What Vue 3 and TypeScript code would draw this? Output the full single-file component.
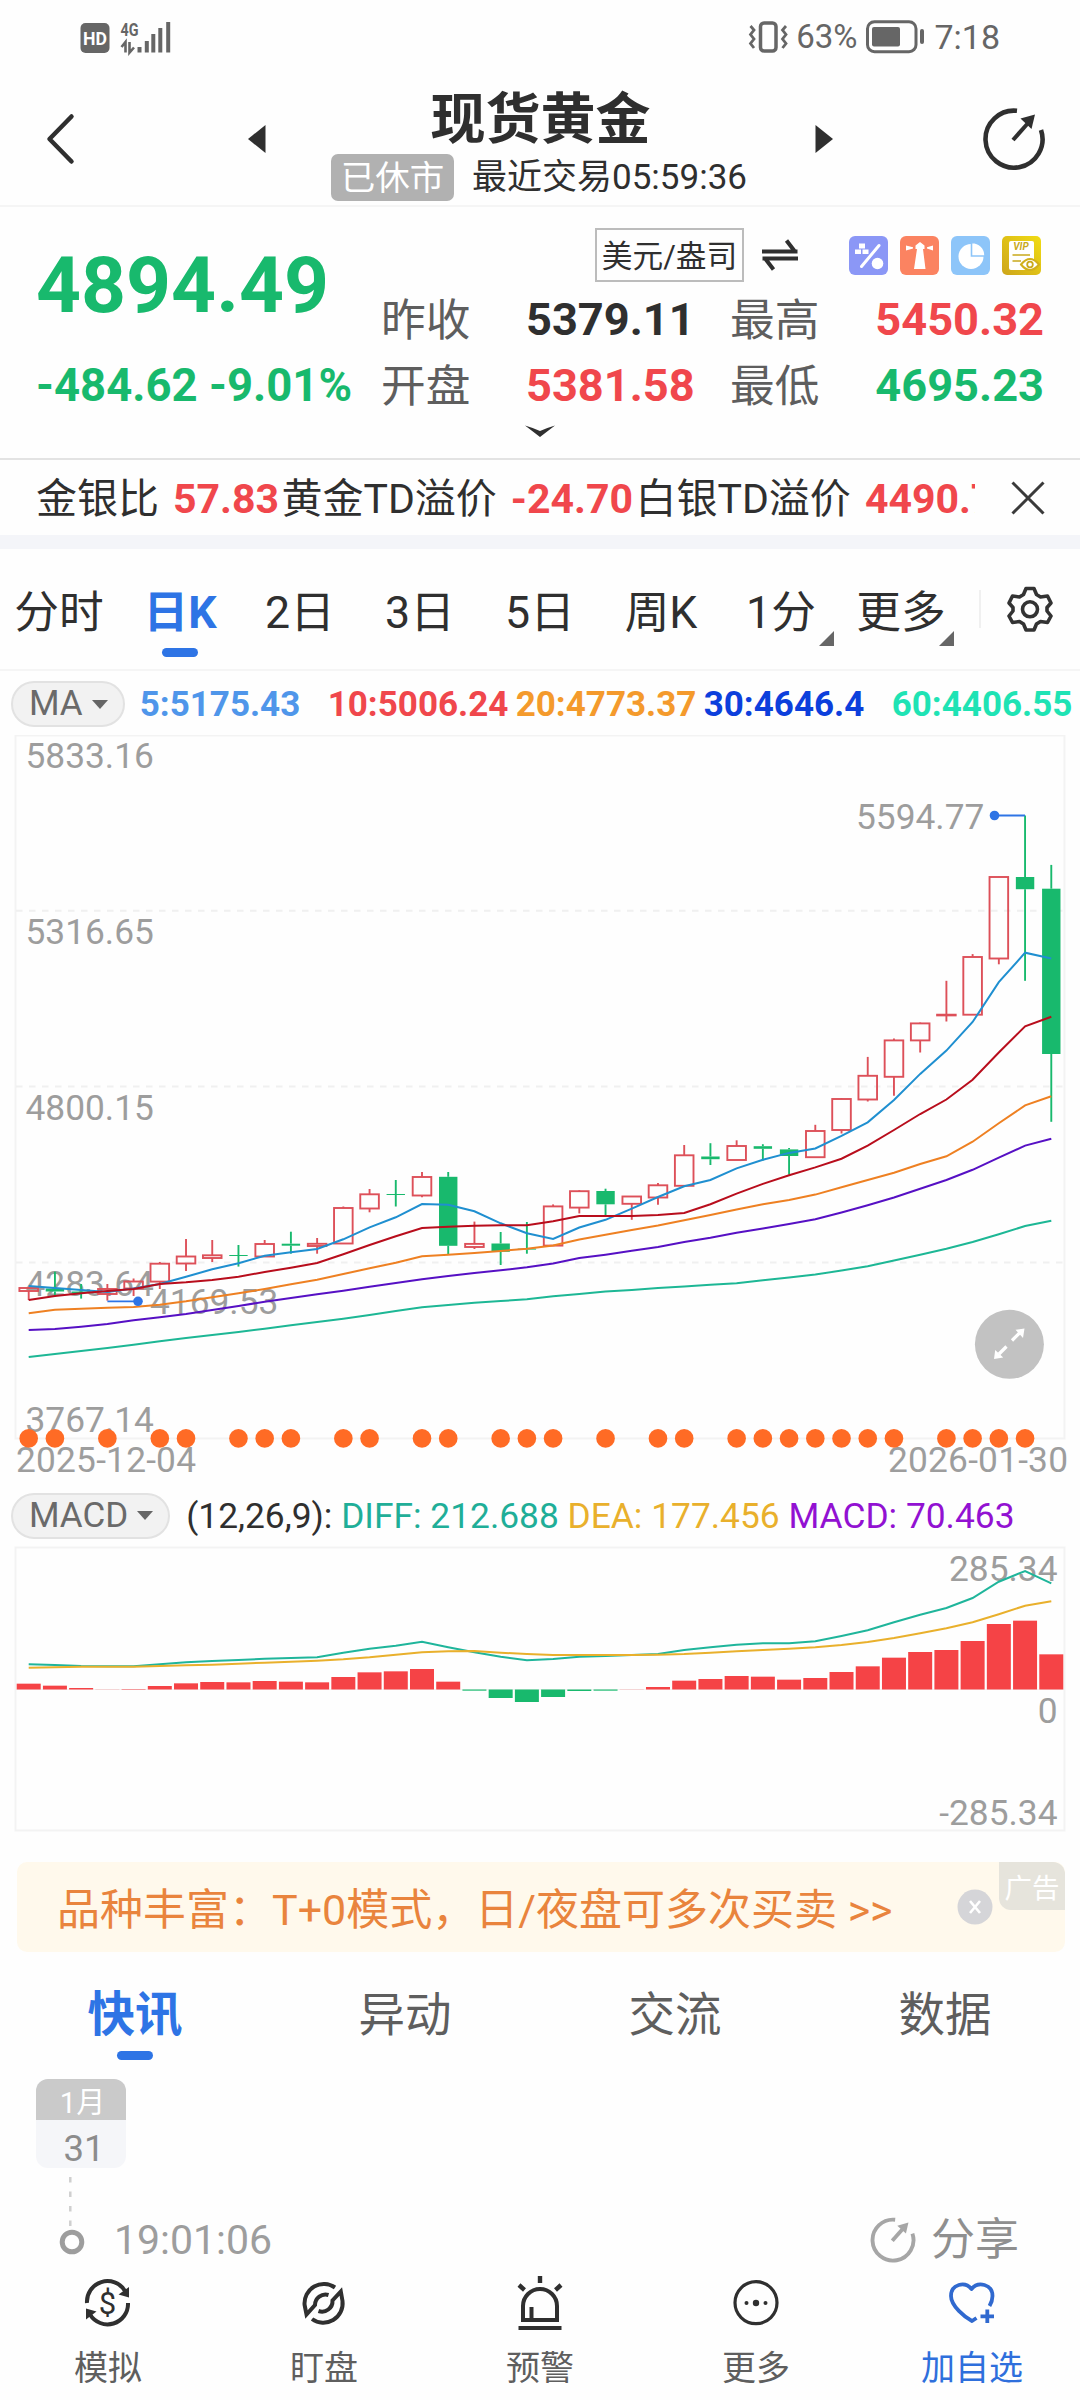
<script setup lang="ts">
interface Candle { up: boolean; high: number; top: number; bottom: number; low: number }

const periods: { label: string; menu?: boolean }[] = [
  { label: '分时' }, { label: '日K' }, { label: '2日' }, { label: '3日' },
  { label: '5日' }, { label: '周K' }, { label: '1分', menu: true }, { label: '更多', menu: true },
]
const averages = [
  { text: '5:5175.43', color: '#4f96ea' },
  { text: '10:5006.24', color: '#f0474c' },
  { text: '20:4773.37', color: '#f49a2c' },
  { text: '30:4646.4', color: '#0c3fdc' },
  { text: '60:4406.55', color: '#1fe3b4' },
]
const ticker = [
  { name: '金银比', value: '57.83' },
  { name: '黄金TD溢价', value: '-24.70' },
  { name: '白银TD溢价', value: '4490.77' },
]
const feeds = ['快讯', '异动', '交流', '数据']

// Chart geometry: 40 sessions, evenly spaced
const step = 26.22
const cx = (i: number): number => 28.7 + i * step
const pts = (ys: number[], f: (n: number) => number = n => n): string =>
  ys.map((y, i) => `${cx(i).toFixed(1)},${f(y).toFixed(1)}`).join(' ')

const rows: [number, number, number, number, number][] = [
  [1, 1287, 1288, 1291, 1300], [0, 1271.7, 1288.5, 1291.5, 1296.5], [0, 1284, 1291.5, 1293, 1298.6],
  [1, 1284, 1289, 1294, 1300.6], [1, 1278.5, 1281.5, 1288.5, 1296], [1, 1262, 1263.7, 1281.6, 1289],
  [1, 1239, 1256.5, 1263.5, 1271], [1, 1240, 1255.3, 1258, 1262], [0, 1245, 1255, 1256, 1266.6],
  [1, 1240, 1244, 1256.5, 1256.5], [0, 1231.7, 1243.7, 1245.7, 1253.7], [1, 1238, 1243.8, 1246, 1253.7],
  [1, 1206.5, 1208, 1243.5, 1243.5], [1, 1189, 1194.3, 1208.5, 1212.3], [0, 1180, 1194, 1195, 1206.5],
  [1, 1172, 1177, 1195.5, 1197.3], [0, 1172, 1176.8, 1245.8, 1255], [1, 1221.6, 1243.9, 1247, 1249],
  [0, 1232, 1243.5, 1251.8, 1265], [0, 1222, 1248.6, 1249.6, 1253.7], [1, 1204.4, 1206.4, 1245.6, 1245.6],
  [1, 1190.2, 1191.2, 1207.6, 1213.4], [0, 1188.7, 1191, 1204.3, 1215.4], [1, 1196, 1196.5, 1203.8, 1219.8],
  [1, 1183, 1185.3, 1197.5, 1204.7], [1, 1145, 1155.3, 1185.8, 1185.8], [0, 1143.2, 1156.5, 1159.2, 1165],
  [1, 1140.3, 1146, 1160, 1160], [0, 1144.2, 1146.2, 1148.8, 1160.6], [0, 1148, 1149.4, 1156, 1174.7],
  [1, 1124.8, 1131, 1157.2, 1157.2], [1, 1098.1, 1099, 1130, 1133.5], [1, 1056.9, 1075.8, 1099.5, 1101.5],
  [1, 1038.5, 1040.4, 1076.8, 1095.7], [1, 1022.5, 1023.4, 1040.4, 1052.5], [1, 980.8, 1014.7, 1015.4, 1021.5],
  [1, 954.1, 957, 1014.7, 1014.7], [1, 876.6, 877, 958.5, 964.3], [0, 815.5, 877, 889.2, 980.8],
  [0, 864.9, 888.7, 1054, 1121.8],
]
const candles: Candle[] = rows.map(([u, high, top, bottom, low]) => ({ up: u === 1, high, top, bottom, low }))

const lines = [
  { color: '#1f8fd0', ys: [1286, 1288, 1290, 1292, 1288.5, 1284, 1276.7, 1269.3, 1263.3, 1255.7, 1252.3, 1249, 1239.3, 1227.3, 1217.3, 1204, 1204.7, 1211.3, 1223.3, 1233.3, 1239, 1227.5, 1219.8, 1208.6, 1197, 1186.3, 1180, 1168.4, 1159.7, 1152.9, 1148.5, 1135.9, 1122.3, 1100, 1073.9, 1050.6, 1022, 982.2, 952.7, 958.5] },
  { color: '#b80d1c', ys: [1300, 1296, 1293.3, 1291, 1289, 1284, 1282.3, 1280, 1276.7, 1272, 1267.7, 1263, 1254.3, 1245, 1236.3, 1228, 1226.7, 1225.7, 1225.3, 1225.3, 1221.2, 1215.9, 1215.9, 1215.9, 1214.9, 1213, 1204.3, 1193.6, 1183.9, 1175.2, 1167.4, 1158.7, 1145.6, 1130, 1114, 1099.5, 1079.7, 1052.5, 1026.4, 1016.7] },
  { color: '#ee8022', ys: [1313.3, 1309.7, 1308.7, 1307.7, 1307, 1304.7, 1301.3, 1297.3, 1293.3, 1289, 1284.3, 1279.7, 1274, 1268.3, 1262.7, 1256.3, 1254.7, 1253, 1251, 1248.7, 1245.4, 1239.6, 1234.8, 1230, 1225.6, 1220.3, 1215, 1209.6, 1204.3, 1199.9, 1194.6, 1187.3, 1180, 1172.8, 1164, 1156.3, 1141.7, 1123.3, 1105.4, 1096.2] },
  { color: '#5610c4', ys: [1330, 1329, 1326.7, 1324, 1320.3, 1317.3, 1314, 1310, 1306, 1301.7, 1298, 1294.3, 1290.7, 1286.7, 1283, 1279.3, 1276, 1273, 1270.3, 1267.3, 1263.4, 1258, 1254.7, 1250.8, 1246.9, 1242, 1237.7, 1232.8, 1228.5, 1224, 1219.3, 1212.5, 1205.2, 1197.5, 1188.7, 1180, 1169.8, 1157.7, 1145.6, 1138.8] },
  { color: '#1db795', ys: [1357, 1354, 1351, 1348, 1344.7, 1341.3, 1338, 1335, 1332, 1328.7, 1325.3, 1322, 1318.7, 1315, 1311, 1307.3, 1305, 1302.7, 1301, 1299.3, 1296.3, 1293.9, 1291.5, 1290, 1288.1, 1286.6, 1284.7, 1283.2, 1280.3, 1277.4, 1274.5, 1270.6, 1266.3, 1260.5, 1254.7, 1248.8, 1242, 1234.3, 1226, 1220.7] },
]
const events = [0, 1, 3, 5, 6, 8, 9, 10, 12, 13, 15, 16, 18, 19, 20, 22, 24, 25, 27, 28, 29, 30, 31, 32, 33, 35, 36, 37, 38]

const sub = (n: number): number => 1470 + n / 3
const zero = 1689.5
const bars = [641, 647, 654, 658, 657, 648, 640, 636, 637, 633, 635, 637, 621, 607, 604, 597, 635, 662, 684, 696, 681, 663, 662, 658, 651, 632, 627, 618, 620, 629, 624, 606, 589, 563, 546, 540, 513, 462, 452, 553].map(sub)
const diff = [583, 585, 588, 589, 589, 583, 577, 573, 570, 566, 564, 562, 548, 536, 527, 515, 532, 547, 560, 571, 567, 560, 558, 555, 552, 540, 532, 524, 520, 520, 514, 498, 481, 457, 434, 414, 384, 335, 303, 340]
const dea = [593, 592, 590, 590, 590, 588, 586, 584, 581, 578, 575, 572, 568, 562, 554, 547, 544, 543, 548, 552, 555, 555, 555, 555, 554, 552, 548, 544, 540, 536, 532, 525, 516, 504, 490, 475, 457, 433, 407, 394]
</script>

<template>
  <div class="page">
    <div class="status">
      <svg class="signal" width="92" height="40" viewBox="80 16 92 40">
        <rect x="80.5" y="22" width="29" height="30" rx="5" fill="#666" />
        <text x="95" y="43.5" text-anchor="middle" font-size="17.5" font-weight="700" fill="#fff" textLength="24" lengthAdjust="spacingAndGlyphs">HD</text>
        <text x="120.5" y="34.5" font-size="18" font-weight="700" fill="#666" textLength="18" lengthAdjust="spacingAndGlyphs">4G</text>
        <path d="M125.500 51.500V41L121.500 46M129.500 41V51.500L134 46.500" fill="none" stroke="#666" stroke-width="2.600" />
        <path d="M139.500 46V51.500M146.800 40V51.500M153.300 33V51.500M160.300 27V51.500M168.200 21V51.500" stroke="#666" stroke-width="4" />
      </svg>
      <div class="status-right">
        <svg width="40" height="34" viewBox="747 19 40 34" fill="none" stroke="#666">
          <rect x="759.500" y="22" width="15.500" height="28" rx="3.500" stroke-width="3.500" />
          <path d="M749.500 25L753 29L749.500 33.500L753 38L749.500 42.500L753 47M785 25L781.500 29L785 33.500L781.500 38L785 42.500L781.500 47" stroke-width="2.800" />
        </svg>
        <span class="pct">63%</span>
        <svg width="60" height="36" viewBox="865 19 60 36">
          <rect x="867.500" y="21.700" width="48.500" height="30" rx="7" fill="none" stroke="#666" stroke-width="3" />
          <rect x="872" y="27" width="28" height="19.500" rx="2" fill="#666" />
          <rect x="920" y="29" width="4" height="15" rx="2" fill="#666" />
        </svg>
        <span class="clock">7:18</span>
      </div>
    </div>

    <header class="head">
      <svg class="back" width="30" height="52" viewBox="45 114 30 52"><path d="M71.500 117.500L49.500 140L71.500 162.500" fill="none" stroke="#2f2f2f" stroke-width="4.500" stroke-linecap="round" stroke-linejoin="round" /></svg>
      <svg width="18" height="28" viewBox="0 0 18 28"><path d="M17.500 0V28L0 14Z" fill="#2f2f2f" /></svg>
      <div class="title">
        <h1>现货黄金</h1>
        <div class="session"><span class="closed">已休市</span><span class="last">最近交易05:59:36</span></div>
      </div>
      <svg width="18" height="28" viewBox="0 0 18 28"><path d="M0.500 0V28L18 14Z" fill="#2f2f2f" /></svg>
      <svg class="share" width="64" height="64" viewBox="0 0 64 64" fill="none" stroke="#2f2f2f" stroke-width="4.600">
        <path d="M35 3.800A28.500 28.500 0 1 0 59 23" /><path d="M31 33L47 15" stroke-width="4" /><path d="M38.500 11.500L53 7.500L49.500 22Z" fill="#2f2f2f" stroke="none" />
      </svg>
    </header>

    <section class="quote">
      <div class="last-price">
        <div class="price">4894.49</div>
        <div class="change">-484.62 -9.01%</div>
      </div>
      <div class="detail">
        <div class="tools">
          <span class="unit">美元/盎司</span>
          <svg class="swap" width="38" height="32" viewBox="0 0 38 32"><path d="M1 12.500H36.500M25.500 1.500L33.500 12M37 19.500H1.500M12.500 30.500L4.500 20" fill="none" stroke="#2f2f2f" stroke-width="4" /></svg>
          <svg class="tool" viewBox="0 0 39 39"><rect width="39" height="39" rx="6" fill="#8b97f6" /><path d="M12.500 30.500L30 9.500" stroke="#fff" stroke-width="3" stroke-linecap="round" /><circle cx="28.500" cy="27.500" r="5.800" fill="#fff" /><path d="M10 7.500h6v5h-6zM6 13.500h6v4.500h-6zM13.500 13.500h6v4.500h-6z" fill="#fff" /></svg>
          <svg class="tool" viewBox="0 0 39 39"><rect width="39" height="39" rx="6" fill="#fb8361" /><path d="M15.500 9.500L20 6L24.500 9.500V13H23L25.500 33H14L17 13H15.500ZM6 9.500L13 11.200V12.500L6 14.500ZM33 9.500L27 11.200V12.500L33 14.500Z" fill="#fff" /></svg>
          <svg class="tool" viewBox="0 0 39 39"><rect width="39" height="39" rx="6" fill="#8dc5f9" /><circle cx="20" cy="20.500" r="12.500" fill="#fff" /><path d="M20.500 6.500A13 13 0 0 1 34 20H20.500Z" fill="#fff" stroke="#8dc5f9" stroke-width="1.600" /></svg>
          <svg class="tool" viewBox="0 0 39 39"><defs><linearGradient id="gold" x1="1" y1="0" x2="0" y2="1"><stop offset="0" stop-color="#f1dc13" /><stop offset="1" stop-color="#cda51b" /></linearGradient></defs><rect width="39" height="39" rx="5" fill="url(#gold)" /><rect x="7" y="5" width="25" height="29" rx="2" fill="#fff" /><text x="19" y="14" text-anchor="middle" font-size="10" font-weight="700" font-style="italic" fill="#c9a91c">VIP</text><path d="M10.500 19H28M10.500 25H19" stroke="#c9a91c" stroke-width="1.700" /><path d="M19 28.500Q28 17.500 37 28.500Q28 39.500 19 28.500Z" fill="#fff" stroke="#d2b01b" stroke-width="2" /><circle cx="28" cy="28.500" r="2.800" fill="none" stroke="#c9a91c" stroke-width="1.800" /></svg>
        </div>
        <div class="figures">
          <span>昨收</span><b>5379.11</b><span>最高</span><b class="red end">5450.32</b>
          <span>开盘</span><b class="red">5381.58</b><span>最低</span><b class="green end">4695.23</b>
        </div>
      </div>
      <svg class="expand" width="32" height="13" viewBox="0 0 32 13"><path d="M1 0.500Q8 2.500 16 6Q24 2.500 31 0.500L16 12Z" fill="#2f2f2f" /></svg>
    </section>

    <section class="ticker">
      <div class="ticker-text"><template v-for="t in ticker" :key="t.name"><span>{{ t.name }}</span><b>{{ t.value }}</b></template></div>
      <svg width="34" height="34" viewBox="0 0 34 34"><path d="M1.500 1.500L32.500 32.500M32.500 1.500L1.500 32.500" stroke="#3a3a3a" stroke-width="3" /></svg>
    </section>
    <div class="strip"></div>

    <nav class="periods">
      <div v-for="(p, i) in periods" :key="p.label" class="period" :class="{ active: i === 1 }">
        {{ p.label }}
        <svg v-if="p.menu" class="corner" width="15" height="15" viewBox="0 0 15 15"><path d="M15 0V15H0Z" fill="#666" /></svg>
      </div>
      <div class="settings">
        <svg width="46" height="48" viewBox="0 0 46 48" fill="none" stroke="#333" stroke-width="3.600" stroke-linejoin="round">
          <path d="M19 3.500H27L29.500 9.500L33.500 12L40.500 11L44 18L40 22.500V26L44 31L40.500 37.500L33.500 36.500L29.500 39L27 45H19L16.500 39L12.500 36.500L5.500 37.500L2 31L6 26V22.500L2 18L5.500 11L12.500 12L16.500 9.500Z" /><circle cx="23" cy="24.300" r="7.500" />
        </svg>
      </div>
    </nav>

    <div class="legend">
      <span class="pill ma">MA<i></i></span>
      <div class="averages"><b v-for="a in averages" :key="a.text" :style="{ color: a.color }">{{ a.text }}</b></div>
    </div>

    <svg class="chart" width="1080" height="745" viewBox="0 735 1080 745">
      <rect x="15.500" y="735.500" width="1049" height="703" fill="none" stroke="#f3f3f3" stroke-width="2" />
      <path d="M16 910.700H1064M16 1086.600H1064M16 1262.500H1064" stroke="#f0f0f0" stroke-width="2" stroke-dasharray="6.500 6.500" />
      <g class="axis">
        <text x="25.500" y="768">5833.16</text><text x="25.500" y="944">5316.65</text><text x="25.500" y="1120">4800.15</text>
        <text x="25.500" y="1296">4283.64</text><text x="25.500" y="1431.500">3767.14</text>
        <text x="16" y="1471.500" textLength="180">2025-12-04</text><text x="888" y="1471.500" textLength="180">2026-01-30</text>
        <text x="856" y="828.500">5594.77</text><text x="150" y="1313.500">4169.53</text>
      </g>
      <g v-for="(c, i) in candles" :key="i" :stroke="c.up ? '#dd5059' : '#18b96d'" stroke-width="1.900" :fill="c.up ? 'none' : '#18b96d'">
        <line :x1="cx(i)" :x2="cx(i)" :y1="c.high" :y2="c.top" /><line :x1="cx(i)" :x2="cx(i)" :y1="c.bottom" :y2="c.low" />
        <rect v-if="c.up" :x="cx(i) - 9.300" :y="c.top" width="18.600" :height="c.bottom - c.top" />
        <rect v-else :x="cx(i) - 9.200" :y="c.top" width="18.400" :height="c.bottom - c.top" stroke="none" />
      </g>
      <polyline v-for="l in lines" :key="l.color" :points="pts(l.ys)" fill="none" :stroke="l.color" stroke-width="2" />
      <path d="M1025 815.500H994.500M107.400 1301.300H138" stroke="#2e74e5" stroke-width="1.800" />
      <circle cx="994.500" cy="815.500" r="4.800" fill="#2e74e5" /><circle cx="138" cy="1301.300" r="4.800" fill="#2e74e5" />
      <circle v-for="e in events" :key="e" :cx="cx(e)" cy="1438.400" r="9.300" fill="#ff6b25" />
      <circle cx="1009.400" cy="1344.300" r="34.500" fill="#c2c2c2" />
      <path d="M1012 1340.500L1019.500 1333M1006.500 1346.500L999 1354" stroke="#fff" stroke-width="3.200" /><path d="M1024.500 1328.500L1015.500 1329.800L1023 1338ZM994 1359L995.200 1350L1003.200 1357.500Z" fill="#fff" />
    </svg>

    <div class="legend macd">
      <span class="pill">MACD<i></i></span>
      <span class="macd-text"><span>(12,26,9): </span><span class="c-diff">DIFF: 212.688</span> <span class="c-dea">DEA: 177.456</span> <span class="c-macd">MACD: 70.463</span></span>
    </div>

    <svg class="chart" width="1080" height="287" viewBox="0 1546 1080 287">
      <rect x="15.500" y="1547.500" width="1049" height="283" fill="none" stroke="#f3f3f3" stroke-width="2" />
      <line x1="16" x2="1064" :y1="zero" :y2="zero" stroke="#f3f3f3" />
      <g class="axis" text-anchor="end">
        <text x="1057.500" y="1580.500">285.34</text><text x="1057.500" y="1722.500">0</text><text x="1057.500" y="1824.500">-285.34</text>
      </g>
      <rect v-for="(b, i) in bars" :key="i" :x="cx(i) - 12" width="24" :y="Math.min(b, zero)" :height="Math.abs(b - zero)" :fill="b <= zero ? '#f54346' : '#18b96d'" />
      <polyline :points="pts(diff, sub)" fill="none" stroke="#1fb59b" stroke-width="2" />
      <polyline :points="pts(dea, sub)" fill="none" stroke="#e9b02c" stroke-width="2" />
    </svg>

    <section class="banner">
      <span>品种丰富：T+0模式，日/夜盘可多次买卖 &gt;&gt;</span>
      <svg class="dismiss" width="36" height="36" viewBox="0 0 36 36"><circle cx="18" cy="18" r="17.500" fill="#d5d5d8" /><path d="M13 12L23 24M23 12L13 24" stroke="#fff" stroke-width="2.600" /></svg>
      <em>广告</em>
    </section>

    <nav class="feeds">
      <div v-for="(f, i) in feeds" :key="f" :class="{ active: i === 0 }">{{ f }}</div>
    </nav>

    <section class="feed">
      <div class="date"><span>1月</span><span>31</span></div>
      <svg class="rail" width="26" height="80" viewBox="59 2176 26 80"><path d="M70.300 2177V2228" stroke="#cfcfcf" stroke-width="2.500" stroke-dasharray="5.500 9" /><circle cx="72" cy="2242" r="9.800" fill="none" stroke="#9d9d9d" stroke-width="5" /></svg>
      <div class="entry">
        <span class="time">19:01:06</span>
        <span class="share-link">
          <svg width="46" height="46" viewBox="0 0 64 64" fill="none" stroke="#a6a6a6" stroke-width="5.400"><path d="M35 3.800A28.500 28.500 0 1 0 59 23" /><path d="M31 33L47 15" /><path d="M38 12L53.500 7.500L50 23Z" fill="#a6a6a6" stroke="none" /></svg>分享</span>
      </div>
    </section>

    <footer class="dock">
      <div>
        <svg width="56" height="56" viewBox="80 2275 56 56" fill="none" stroke="#2f2f2f" stroke-width="4">
          <path d="M87 2303A20.500 20.500 0 0 1 125 2291M128 2303A20.500 20.500 0 0 1 90 2314.500" /><path d="M129 2287V2297.500L118.500 2294.500ZM86 2308.500L96.500 2311.500L86 2319.500Z" fill="#2f2f2f" stroke="none" />
          <text x="107.500" y="2313.500" text-anchor="middle" font-size="31" fill="#2f2f2f" stroke="none">$</text>
        </svg>模拟
      </div>
      <div>
        <svg width="56" height="56" viewBox="296 2275 56 56" fill="none" stroke="#2f2f2f" stroke-width="4" stroke-linejoin="miter">
          <path d="M335 2287.500A19.300 19.300 0 0 0 304.600 2305L306.500 2314.500L315 2305A10.500 10.500 0 0 1 328.500 2295" />
          <path d="M312 2319A19.300 19.300 0 0 0 342.500 2301L340.800 2291.500L332.500 2300.500A10.500 10.500 0 0 1 318.500 2311" />
        </svg>盯盘
      </div>
      <div>
        <svg width="56" height="56" viewBox="511.500 2275 56 56" fill="none" stroke="#2f2f2f" stroke-width="4">
          <path d="M522.500 2320V2306A16.800 16.800 0 0 1 556.500 2306V2320ZM531 2319V2307M518 2328H561" /><path d="M539.500 2276V2283M518.500 2285L524 2290M560.500 2285L555 2290" stroke-width="4.400" />
        </svg>预警
      </div>
      <div>
        <svg width="56" height="56" viewBox="727.500 2275 56 56"><circle cx="755.500" cy="2302.700" r="21" fill="none" stroke="#2f2f2f" stroke-width="3.200" /><circle cx="746" cy="2303" r="2" fill="#2f2f2f" /><circle cx="755.500" cy="2303" r="3.200" fill="#2f2f2f" /><circle cx="765" cy="2303" r="2" fill="#2f2f2f" /></svg>更多
      </div>
      <div class="on">
        <svg width="56" height="56" viewBox="944 2275 56 56" fill="none" stroke="#3069cf" stroke-width="3.800"><path d="M976.500 2318L972 2321C965 2317.500 951 2306 951 2296C951 2284 965 2281 971.500 2289C978 2281 992.500 2284 992.500 2296Q992.500 2301 989.500 2306" stroke-linejoin="round" /><path d="M987.300 2309.500V2323M980.500 2316.300H994" /></svg>加自选
      </div>
    </footer>
  </div>
</template>

<style>
body { background: #fefefe; }
</style>

<style scoped>
.page { width: 1080px; height: 2400px; overflow: hidden; display: flex; flex-direction: column; background: #fefefe; color: #2f2f2f; font-family: Roboto, "Noto Sans CJK SC", sans-serif; }
.page > * { flex: none; box-sizing: border-box; }
svg { display: block; flex: none; }
svg text { font-family: Roboto, "Noto Sans CJK SC", sans-serif; }
.red { color: #f0474c; }
.green { color: #18b96d; }

.status { height: 70px; padding: 3px 80px 0 80px; display: flex; justify-content: space-between; align-items: center; color: #666; font-size: 33px; }
.signal { overflow: visible; }
.status-right { display: flex; align-items: center; gap: 8px; }
.status-right span { line-height: 36px; padding-top: 1px; }
.clock { font-size: 34px; margin-left: 1px; }

.head { height: 137px; border-bottom: 2px solid #f5f5f5; display: flex; align-items: center; padding: 3px 34px 0 45px; }
.back { margin-right: 173px; }
.title { flex: 1; height: 134px; padding-top: 0; }
h1 { margin: 14px 0 0; height: 68px; line-height: 66px; text-align: center; font-size: 55px; font-weight: 700; }
.session { height: 47px; display: flex; justify-content: center; align-items: center; gap: 18px; font-size: 35px; white-space: nowrap; margin-right: 3px; }
.closed { width: 123px; height: 47px; line-height: 49px; border-radius: 7px; background: #b1b1b1; color: #fff; text-align: center; font-size: 34.500px; }
.last { line-height: 50px; }
.share { margin-left: 149px; }

.quote { height: 253px; border-bottom: 2px solid #e3e3e3; display: flex; flex-wrap: wrap; align-content: flex-start; }
.last-price { width: 381px; padding-left: 36px; box-sizing: border-box; color: #18b96d; font-weight: 700; white-space: nowrap; }
.price { margin-top: 37px; height: 82px; line-height: 82px; font-size: 78.500px; }
.change { margin-top: 27px; height: 66px; line-height: 66px; font-size: 45.500px; }
.detail { width: 664px; }
.tools { margin-top: 21px; height: 54px; padding-left: 214px; display: flex; align-items: center; }
.unit { flex: none; width: 149px; height: 54px; box-sizing: border-box; border: 2px solid #bcbcbc; line-height: 53px; text-align: center; font-size: 30.700px; }
.swap { margin: 0 50px 0 17px; }
.tool { width: 39px; height: 39px; margin-right: 12px; }
.figures { margin-top: 5px; display: grid; grid-template-columns: 145px 204px 144px 170px; grid-auto-rows: 66px; line-height: 67px; font-size: 44.700px; color: #5e5e5e; }
.figures b { color: #2f2f2f; font-size: 45.200px; line-height: 66px; }
.figures span { padding-top: 1px; }
.figures b.red { color: #f0474c; }
.figures b.green { color: #18b96d; }
.figures .end { justify-self: end; }
.expand { margin: 6px 0 0 524px; }

.ticker { height: 75px; padding: 1px 35px 0 36px; display: flex; justify-content: space-between; align-items: center; }
.ticker-text { width: 939px; overflow: hidden; white-space: nowrap; font-size: 41px; line-height: 60px; padding-top: 2px; }
.ticker-text b { color: #f0474c; margin-left: 14px; margin-right: 2.500px; }
.strip { height: 14px; background: #f4f5f9; }

.periods { height: 122px; border-bottom: 2px solid #f5f5f5; display: flex; }
.period { position: relative; width: 120px; box-sizing: border-box; text-align: center; font-size: 44.700px; line-height: 128px; white-space: nowrap; }
.active { color: #2e74e5; font-weight: 700; }
.period.active::after, .feeds .active::after { content: ""; position: absolute; left: 50%; margin-left: -18px; width: 36px; height: 9px; border-radius: 4.500px; background: #2e74e5; }
.period.active::after { top: 99px; }
.period:first-child { padding-right: 2px; }
.period:nth-child(n+6) { padding-left: 2px; }
.corner { position: absolute; right: 6px; top: 82px; }
.settings { flex: 1; margin: 41px 0 41px 19px; border-left: 2px solid #f0f0f0; display: flex; align-items: center; padding-left: 26px; }

.legend { height: 64px; padding: 10px 0 8px 11px; display: flex; align-items: center; font-size: 35px; white-space: nowrap; }
.pill { height: 46px; box-sizing: border-box; border: 2px solid #e2e2e2; border-radius: 23px; background: #f2f2f2; color: #6a6a6a; line-height: 44px; padding: 0 15px 0 16px; display: flex; align-items: center; }
.pill i { margin-left: 9px; border: 8px solid transparent; border-top: 9px solid #666; border-bottom: 0; }
.averages { flex: 1; margin-left: 15px; display: grid; grid-template-columns: repeat(5, 188px); }
.axis { font-size: 35.300px; fill: #9d9d9d; }
.macd { height: 66px; padding: 12px 0 7px 11px; }
.macd-text { margin-left: 16px; font-size: 35.350px; }
.c-diff { color: #1fae98; }
.c-dea { color: #e9b02c; }
.c-macd { color: #9211d2; }

.banner { position: relative; margin: 29px 15px 0 17px; height: 90px; border-radius: 10px; background: #fff9ec; color: #e9843d; font-size: 43px; line-height: 92px; padding: 5px 0 0 40px; display: flex; align-items: center; white-space: nowrap; }
.dismiss { position: absolute; left: 940px; top: 27px; }
.banner em { position: absolute; right: 0; top: 0; width: 66px; height: 48px; border-radius: 0 12px 0 12px; background: #e6e4dc; color: #fff; font-style: normal; font-size: 27.500px; line-height: 53px; text-align: center; }

.feeds { height: 127px; display: flex; font-size: 46.500px; line-height: 126px; color: #5e5e5e; }
.feeds div { position: relative; width: 270px; text-align: center; }
.feeds .active { color: #2e74e5; font-size: 47.500px; }
.feeds .active::after { top: 99px; }

.feed { height: 186px; }
.date { width: 90px; height: 89px; margin-left: 36px; border-radius: 12px; background: #f5f6f9; text-align: center; display: flex; flex-direction: column; }
.date span:first-child { height: 41px; line-height: 48px; border-radius: 12px 12px 0 0; background: #cacaca; color: #fff; font-size: 29px; padding-left: 3px; }
.date span:last-child { height: 40px; line-height: 40px; padding-top: 9px; font-size: 36.500px; color: #8c8c8c; padding-left: 6px; }
.rail { margin: 8px 0 0 59px; }
.entry { margin-top: -47px; height: 62px; padding: 0 61px 0 114px; display: flex; justify-content: space-between; align-items: center; color: #9d9d9d; font-size: 41px; }
.share-link { display: flex; align-items: center; gap: 15px; font-size: 44px; line-height: 62px; color: #8f8f8f; }

.dock { height: 135px; display: flex; background: #fefefe; color: #5e5e5e; font-size: 34px; position: relative; }
.dock div { width: 216px; padding-top: 10px; display: flex; flex-direction: column; align-items: center; line-height: 40px; }
.dock svg { margin-bottom: 17px; }
.dock .on { color: #2e6fdc; }
</style>
